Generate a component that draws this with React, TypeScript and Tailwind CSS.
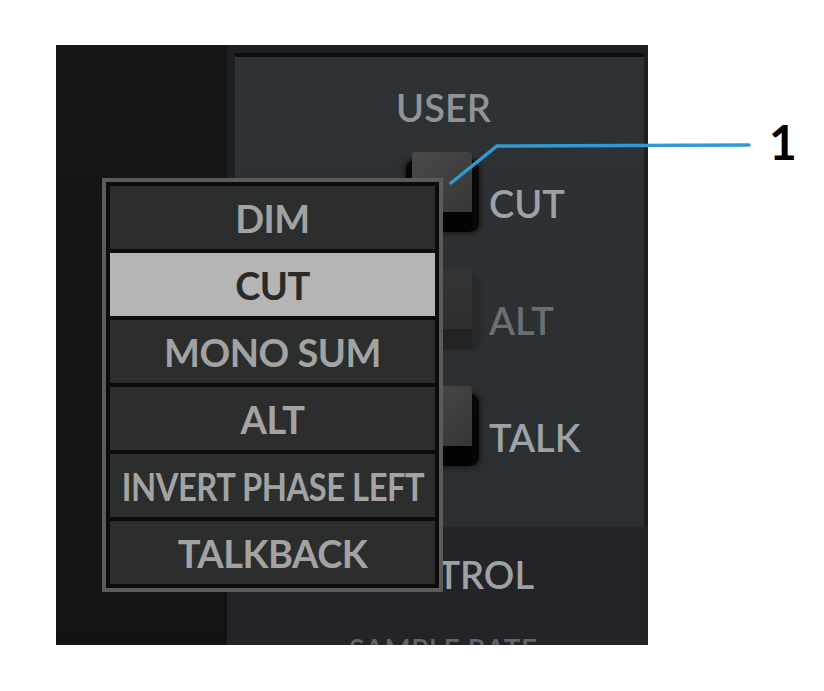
import React from "react";

const items = ["DIM", "CUT", "MONO SUM", "ALT", "INVERT PHASE LEFT", "TALKBACK"];

function Btn({ dim }: { dim?: boolean }) {
  return (
    <div className="relative w-[60px] h-[80px]">
      <div
        className={
          "absolute -left-[6px] -right-[7px] top-[8px] bottom-0 rounded-[9px] " +
          (dim
            ? "bg-[#26282a] shadow-[0_0_4px_1px_rgba(0,0,0,0.2)]"
            : "bg-[#070707] shadow-[0_0_5px_2px_rgba(0,0,0,0.45)]")
        }
      />
      <div
        className={
          "absolute left-0 top-0 w-[60px] h-[80px] rounded-b-[6px] rounded-t-[2px] overflow-hidden " +
          (dim ? "bg-[#212325]" : "bg-[#030303]")
        }
      >
        <div
          className={
            "h-[60px] w-full " +
            (dim
              ? "bg-gradient-to-b from-[#323436] to-[#2d2f31]"
              : "bg-gradient-to-br from-[#4a4a4a] to-[#363636]")
          }
        />
      </div>
    </div>
  );
}

function Row({ label, dim }: { label: string; dim?: boolean }) {
  return (
    <div className="flex items-center h-[80px]">
      <Btn dim={dim} />
      <span
        className={
          "ml-[17px] mt-[22px] text-[38px] leading-none font-semibold " +
          (dim ? "text-[#6a6f74]" : "text-[#9da2a7]")
        }
      >
        {label}
      </span>
    </div>
  );
}

export default function App() {
  return (
    <div
      className="relative w-[824px] h-[691px] bg-white"
      style={{ fontFamily: "Lato, 'Open Sans', sans-serif" }}
    >
      <div className="absolute left-[56px] top-[45px] w-[592px] h-[600px] flex overflow-hidden">
        <div className="w-[171px] bg-gradient-to-b from-[#151618] to-[#121315]" />
        <div className="flex-1 flex flex-col bg-[#1d1f22]">
          <div className="shrink-0 mt-[8px] ml-[8px] mr-[4px] h-[474px] border-t-4 border-[#0d0e0f] bg-gradient-to-b from-[#2f3235] to-[#2c2f32] flex flex-col">
            <div className="pt-[31px] text-center pl-[8px] text-[38px] leading-none font-semibold text-[#8f9499]">
              USER
            </div>
            <div className="ml-[177px] mt-[26px] flex flex-col gap-[37px]">
              <Row label="CUT" />
              <Row label="ALT" dim />
              <Row label="TALK" />
            </div>
          </div>
          <div className="flex-1 min-h-0 overflow-hidden bg-[#222427] flex flex-col items-center pl-[12px]">
            <div className="shrink-0 mt-[28px] text-[38px] leading-none font-semibold text-[#9da2a7]">
              CONTROL
            </div>
            <div className="shrink-0 mt-[42px] text-[28px] leading-none font-semibold tracking-[0.5px] text-[#60656a]">
              SAMPLE RATE
            </div>
          </div>
        </div>
      </div>

      {/* dropdown menu */}
      <div className="absolute left-[102px] top-[178px] w-[341px] border-[4px] border-[#5b5b5b] bg-[#0c0c0c] px-[4px] py-[4px] flex flex-col gap-[4px]">
        {items.map((it) => (
          <div
            key={it}
            className={
              "h-[63px] flex items-center justify-center font-bold text-[38px] leading-none whitespace-nowrap " +
              (it === "CUT" ? "bg-[#b5b5b5] text-[#2a2a2a]" : "bg-[#2c2d2d] text-[#a3a3a3]")
            }
          >
            <span
              className={
                it === "INVERT PHASE LEFT"
                  ? "inline-block tracking-[-0.5px] scale-x-[0.86]"
                  : "tracking-[-0.5px]"
              }
            >
              {it}
            </span>
          </div>
        ))}
      </div>

      {/* callout */}
      <svg className="absolute left-0 top-0" width="824" height="691">
        <polyline
          points="451,183 497,146 749,145"
          fill="none"
          stroke="#2f9ad4"
          strokeWidth="3.5"
          strokeLinecap="round"
        />
      </svg>
      <div className="absolute left-[769px] top-[118px] text-[48px] leading-none font-bold text-black">1</div>
    </div>
  );
}
